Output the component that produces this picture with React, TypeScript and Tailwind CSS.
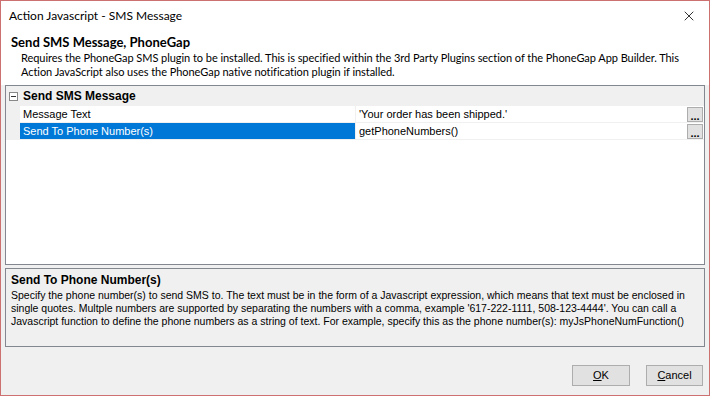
import { X } from 'lucide-react';

const ui = 'font-["Lato","Noto_Sans",sans-serif]';
const grid = 'font-["Liberation_Sans",Arial,sans-serif]';

function DotsButton() {
  return (
    <div className="mr-[1px] flex h-[15px] w-[16px] items-end justify-center border border-[#adadad] bg-[#e1e1e1] pb-[1px] text-[11px] font-bold leading-[8px] text-black">
      ...
    </div>
  );
}

function Row({ label, value, selected }: { label: string; value: string; selected?: boolean }) {
  return (
    <div className="flex h-[17px] border-b border-[#f0f0f0]">
      <div className="w-[14px] shrink-0 bg-[#f0f0f0]" />
      <div
        className={`flex w-[336px] shrink-0 items-center border-r border-[#f0f0f0] pl-[3px] ${
          selected ? 'bg-[#0078d7] text-white' : 'bg-white text-black'
        }`}
      >
        {label}
      </div>
      <div className="flex flex-1 items-center justify-between bg-white pl-[3px]">
        <span>{value}</span>
        <DotsButton />
      </div>
    </div>
  );
}

export default function App() {
  return (
    <div className={`flex h-[396px] w-[710px] flex-col border border-[#cc7070] bg-[#f0f0f0] ${ui}`}>
      <div className="flex h-[29px] shrink-0 items-center justify-between bg-white pl-[8px] pr-[12px] text-[12px] text-black">
        <span>Action Javascript - SMS Message</span>
        <X size={16} strokeWidth={1.2} />
      </div>

      <div className="h-[55px] shrink-0 whitespace-nowrap bg-white pl-[10px] pt-[3px] text-[11px] tracking-[-0.05px] text-black">
        <div className="text-[13px] font-bold leading-[18px] tracking-normal">Send SMS Message, PhoneGap</div>
        <div className="pl-[10px] leading-[14px]">
          Requires the PhoneGap SMS plugin to be installed. This is specified within the 3rd Party Plugins section of the PhoneGap App Builder. This
          <br />
          Action JavaScript also uses the PhoneGap native notification plugin if installed.
        </div>
      </div>

      <div className="flex flex-1 flex-col px-[4px]">
        <div className={`flex h-[180px] flex-col border border-[#828790] bg-white text-[11px] ${grid}`}>
          <div className="flex h-[20px] items-center bg-[#f0f0f0]">
            <div className="ml-[3px] mr-[5px] flex h-[9px] w-[9px] items-center justify-center border border-[#888] bg-white">
              <div className="h-[1px] w-[5px] bg-[#333]" />
            </div>
            <span className="text-[12px] font-bold text-black">Send SMS Message</span>
          </div>
          <Row label="Message Text" value="'Your order has been shipped.'" />
          <Row label="Send To Phone Number(s)" value="getPhoneNumbers()" selected />
        </div>

        <div className={`mt-[3px] h-[79px] whitespace-nowrap border border-[#828790] bg-[#f0f0f0] pl-[5px] pt-[2px] text-[10.5px] text-black ${grid}`}>
          <div className="text-[12px] font-bold leading-[18px]">Send To Phone Number(s)</div>
          <div className="leading-[13px]">
            Specify the phone number(s) to send SMS to. The text must be in the form of a Javascript expression, which means that text must be enclosed in
            <br />
            single quotes. Multple numbers are supported by separating the numbers with a comma, example '617-222-1111, 508-123-4444'. You can call a
            <br />
            Javascript function to define the phone numbers as a string of text. For example, specify this as the phone number(s): myJsPhoneNumFunction()
          </div>
        </div>

        <div className={`mr-[2px] mt-[18px] flex justify-end gap-[16px] text-[11px] ${grid}`}>
          <button className="h-[21px] w-[58px] border border-[#adadad] bg-[#e1e1e1] text-black">
            <u>O</u>K
          </button>
          <button className="h-[21px] w-[57px] border border-[#adadad] bg-[#e1e1e1] text-black">
            <u>C</u>ancel
          </button>
        </div>
      </div>
    </div>
  );
}
